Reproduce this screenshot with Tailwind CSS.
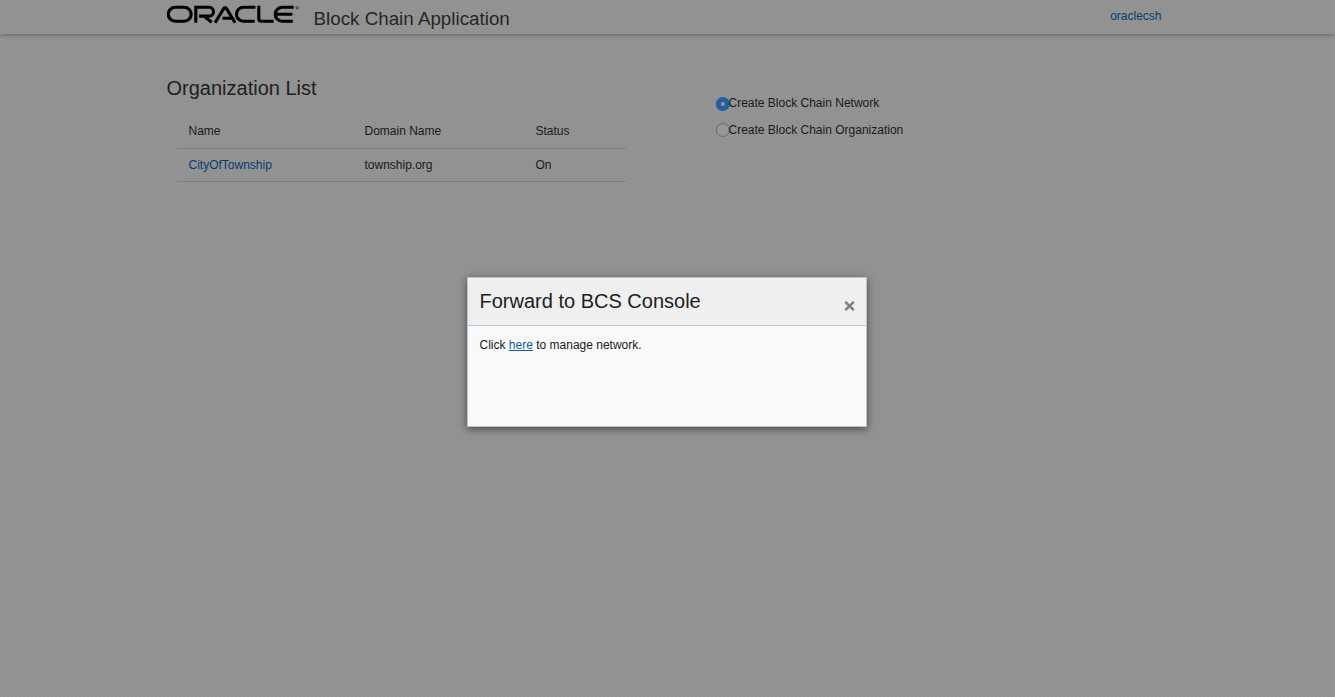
<!DOCTYPE html>
<html lang="en">
<head>
<meta charset="utf-8">
<title>Block Chain Application</title>
<script src="https://cdn.jsdelivr.net/npm/@tailwindcss/browser@4"></script>
</head>
<body class="h-[697px] overflow-hidden bg-[#929292] bg-[repeating-linear-gradient(45deg,#8f8f8f_0px,#8f8f8f_1.414px,#959595_1.414px,#959595_2.828px)] font-['Liberation_Sans',Arial,sans-serif] text-xs text-[#1a1a1a]">
<header class="h-[34px] bg-[#929292] shadow-[0_1px_4px_rgba(0,0,0,0.3)]">
  <div class="ml-[166.5px] flex w-[995px] items-start">
    <svg class="mt-[5px] h-[19px] w-[133px] shrink-0" viewBox="0.5 0.2 133 19" fill="none" stroke="#000" stroke-width="3.1">
      <path d="M8.7 2.5H17.7a6.7 6.7 0 0 1 0 13.9H8.7a6.7 6.7 0 0 1 0-13.9z"/>
      <path d="M29.3 18V2.5H42.6a4.3 4.3 0 0 1 0 8.8H32.6M37.3 11.3L45.2 17.5"/>
      <path d="M48.6 18L57.3 3.6Q58.6 1.7 59.9 3.6L68.6 18M56 13.4H64.5"/>
      <path d="M89 2.5H76.9a6.7 6.7 0 0 0 0 13.9H88.2M92.3 1V14Q92.3 16.4 94.7 16.4H107.2M127.3 2.5H115.7a6.7 6.7 0 0 0 0 13.9H126.4M110.5 9.4H125.8"/>
      <circle cx="130.8" cy="3" r="1.2" stroke="#333" stroke-width="1"/>
    </svg>
    <h1 class="ml-[14px] mt-[7px] text-[18.8px] leading-[23px] whitespace-nowrap text-[#262626]">Block Chain Application</h1>
    <a class="ml-auto mt-[9px] leading-[14px] text-[#073c6c]">oraclecsh</a>
  </div>
</header>
<main class="ml-[166.5px] flex">
  <section class="w-[549px]">
    <h2 class="mt-[42px] text-[20px] leading-6 text-[#202020]">Organization List</h2>
    <div class="ml-[10px] mt-[14px] w-[449px]">
      <div class="grid h-[35px] grid-cols-[176px_171px_1fr] border-b border-[#808080] pl-3 pt-[10px] leading-[14px]">
        <span>Name</span><span>Domain Name</span><span>Status</span>
      </div>
      <div class="grid h-[33px] grid-cols-[176px_171px_1fr] border-b border-[#808080] pl-3 pt-[9px] leading-[14px]">
        <a class="text-[#073c6c]">CityOfTownship</a><span>township.org</span><span>On</span>
      </div>
    </div>
  </section>
  <section class="pt-[62px] leading-[14px]">
    <div class="flex h-[27px] items-start">
      <svg class="mt-px h-[14px] w-[13px] overflow-visible" viewBox="0 0 13 14"><circle cx="6.8" cy="7" r="7" fill="#20609c"/><circle cx="6.8" cy="7" r="2" fill="#9a9a9a"/></svg>
      <span>Create Block Chain Network</span>
    </div>
    <div class="flex items-start">
      <svg class="h-[14px] w-[13px] overflow-visible" viewBox="0 0 13 14"><circle cx="6.8" cy="7" r="6.4" fill="#979797" stroke="#6c6c6c"/></svg>
      <span>Create Block Chain Organization</span>
    </div>
  </section>
</main>
<div role="dialog" class="absolute left-[467px] top-[277px] h-[150px] w-[400px] border border-[#b4c5d3] bg-[#f9f9f9] shadow-[0_2px_8px_rgba(0,0,0,0.5)]">
  <div class="flex h-12 justify-between border-b border-[#b4c5d3] bg-[#efefef] pl-[11.5px] pr-[11px]">
    <h3 class="mt-[11px] text-[20px] leading-6 text-[#202020]">Forward to BCS Console</h3>
    <svg class="mt-[23px] h-[10px] w-[11px]" viewBox="0 0 11 10" stroke="#7c8083" stroke-width="2.4"><path d="M1.2 .8L9.8 9.2M9.8 .8L1.2 9.2"/></svg>
  </div>
  <p class="pl-[11.5px] pt-[12px] leading-[14px]">Click <a class="text-[#045fab] underline">here</a> to manage network.</p>
</div>
</body>
</html>
